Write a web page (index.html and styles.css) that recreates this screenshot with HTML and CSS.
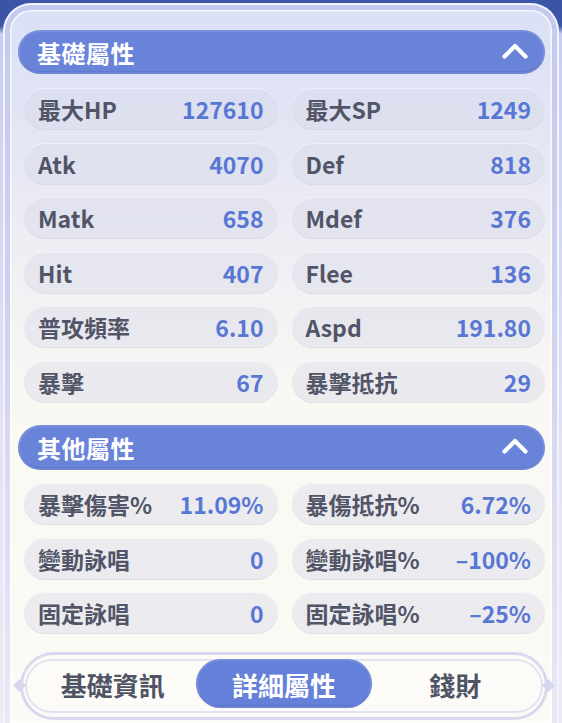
FILE: index.html
```html
<!DOCTYPE html>
<html lang="zh-Hant">
<head>
<meta charset="utf-8">
<title>詳細屬性</title>
<link rel="stylesheet" href="styles.css">
</head>
<body>
<div class="frame">
  <div class="inner">
    <div class="section-head first">
      <span class="section-title">基礎屬性</span>
      <svg class="chev" width="28" height="18" viewBox="0 0 28 18"><path d="M3.5 14.5 L14 4 L24.5 14.5" fill="none" stroke="#fff" stroke-width="4.2" stroke-linecap="round" stroke-linejoin="round"/></svg>
    </div>
    <div class="grid">
      <div class="cell"><span class="lbl">最大HP</span><span class="val">127610</span></div>
      <div class="cell"><span class="lbl">最大SP</span><span class="val">1249</span></div>
      <div class="cell"><span class="lbl">Atk</span><span class="val">4070</span></div>
      <div class="cell"><span class="lbl">Def</span><span class="val">818</span></div>
      <div class="cell"><span class="lbl">Matk</span><span class="val">658</span></div>
      <div class="cell"><span class="lbl">Mdef</span><span class="val">376</span></div>
      <div class="cell"><span class="lbl">Hit</span><span class="val">407</span></div>
      <div class="cell"><span class="lbl">Flee</span><span class="val">136</span></div>
      <div class="cell"><span class="lbl">普攻頻率</span><span class="val">6.10</span></div>
      <div class="cell"><span class="lbl">Aspd</span><span class="val">191.80</span></div>
      <div class="cell"><span class="lbl">暴擊</span><span class="val">67</span></div>
      <div class="cell"><span class="lbl">暴擊抵抗</span><span class="val">29</span></div>
    </div>
    <div class="section-head second">
      <span class="section-title">其他屬性</span>
      <svg class="chev" width="28" height="18" viewBox="0 0 28 18"><path d="M3.5 14.5 L14 4 L24.5 14.5" fill="none" stroke="#fff" stroke-width="4.2" stroke-linecap="round" stroke-linejoin="round"/></svg>
    </div>
    <div class="grid grid2">
      <div class="cell"><span class="lbl">暴擊傷害%</span><span class="val">11.09%</span></div>
      <div class="cell"><span class="lbl">暴傷抵抗%</span><span class="val">6.72%</span></div>
      <div class="cell"><span class="lbl">變動詠唱</span><span class="val">0</span></div>
      <div class="cell"><span class="lbl">變動詠唱%</span><span class="val">–100%</span></div>
      <div class="cell"><span class="lbl">固定詠唱</span><span class="val">0</span></div>
      <div class="cell"><span class="lbl">固定詠唱%</span><span class="val">–25%</span></div>
    </div>
    <div class="tabs">
      <div class="tabs-inner">
        <div class="tab">基礎資訊</div>
        <div class="tab active">詳細屬性</div>
        <div class="tab">錢財</div>
      </div>
    </div>
  </div>
</div>
</body>
</html>
```

FILE: styles.css
```css
* { box-sizing: border-box; }
html, body { margin: 0; padding: 0; }
body {
  width: 562px;
  height: 723px;
  overflow: hidden;
  background: linear-gradient(#3b55a6 0, #3b55a6 26px, #c9cef0 34px, #e2e2f3 60%, #ecebf5 100%);
  font-family: "Noto Sans CJK TC", "Noto Sans", sans-serif;
}
.frame {
  margin: 3px 3px 0;
  height: 720px;
  border: 2px solid #f2f3ff;
  border-bottom: none;
  border-radius: 28px 28px 0 0;
  background: linear-gradient(#c4caef 0, #cdd1f0 40%, #e9e8f5 100%);
  padding: 5px 5px 0;
}
.inner {
  height: 713px;
  border-radius: 21px 21px 0 0;
  background: linear-gradient(#dbe0f6 0, #e4e6f4 18%, #f1f0f4 38%, #faf8f3 55%, #fbfaf5 100%);
  box-shadow: inset 0 0 0 1.5px rgba(255,255,255,0.75);
  padding: 20px 7px 0 8px;
}
.section-head {
  display: flex;
  align-items: center;
  justify-content: space-between;
  height: 44px;
  border-radius: 23px;
  background: #6983d9;
  box-shadow: inset 0 0 0 2px rgba(255,255,255,0.10), inset 0 -3px 0 rgba(50,70,160,0.18);
  padding: 0 16px 0 19px;
}
.section-head.second { height: 45px; margin-top: 22px; }
.section-title {
  color: #ffffff;
  font-size: 24px;
  font-weight: 700;
  letter-spacing: 0.5px;
}
.chev { display: block; margin-top: -3px; }
.grid {
  display: grid;
  grid-template-columns: 1fr 1fr;
  column-gap: 14px;
  row-gap: 12.6px;
  margin-top: 14px;
  padding-left: 6px;
}
.grid2 { margin-top: 13px; }
.cell {
  height: 42px;
  border-radius: 21px;
  background: rgba(214,216,230,0.42);
  box-shadow: inset 0 1px 0 rgba(255,255,255,0.55), inset 0 -1px 0 rgba(190,192,210,0.25);
  display: flex;
  align-items: center;
  justify-content: space-between;
  padding: 0 14px;
}
.lbl {
  color: #515567;
  font-size: 23px;
  font-weight: 600;
}
.val {
  color: #5877d4;
  font-size: 23px;
  font-weight: 700;
}
.tabs {
  position: relative;
  margin: 18px -3px 0 2px;
  height: 68px;
  border: 3px solid #d9d8ef;
  border-radius: 34px;
  padding: 4px 2px;
  background: #fcfbf7;
}
.tabs::before, .tabs::after {
  content: "";
  position: absolute;
  top: 26px;
  width: 9px;
  height: 9px;
  background: #d5d5ee;
  transform: rotate(45deg);
}
.tabs::before { left: -8px; }
.tabs::after { right: -8px; }
.tabs-inner {
  height: 100%;
  border: 2px solid #e3e2f1;
  border-radius: 30px;
  display: grid;
  grid-template-columns: 1fr 1fr 1fr;
  align-items: stretch;
}
.tab {
  display: flex;
  align-items: center;
  justify-content: center;
  color: #4f5465;
  font-size: 26px;
  font-weight: 600;
  margin-top: -2px;
  height: 49px;
  padding-top: 2px;
}
.tab.active {
  margin-left: -2px;
  margin-right: -2px;
  background: #6580d8;
  color: #ffffff;
  font-weight: 700;
  border-radius: 25px;
  box-shadow: inset 0 0 0 2px rgba(255,255,255,0.10), inset 0 -3px 0 rgba(50,70,160,0.2);
}
```
